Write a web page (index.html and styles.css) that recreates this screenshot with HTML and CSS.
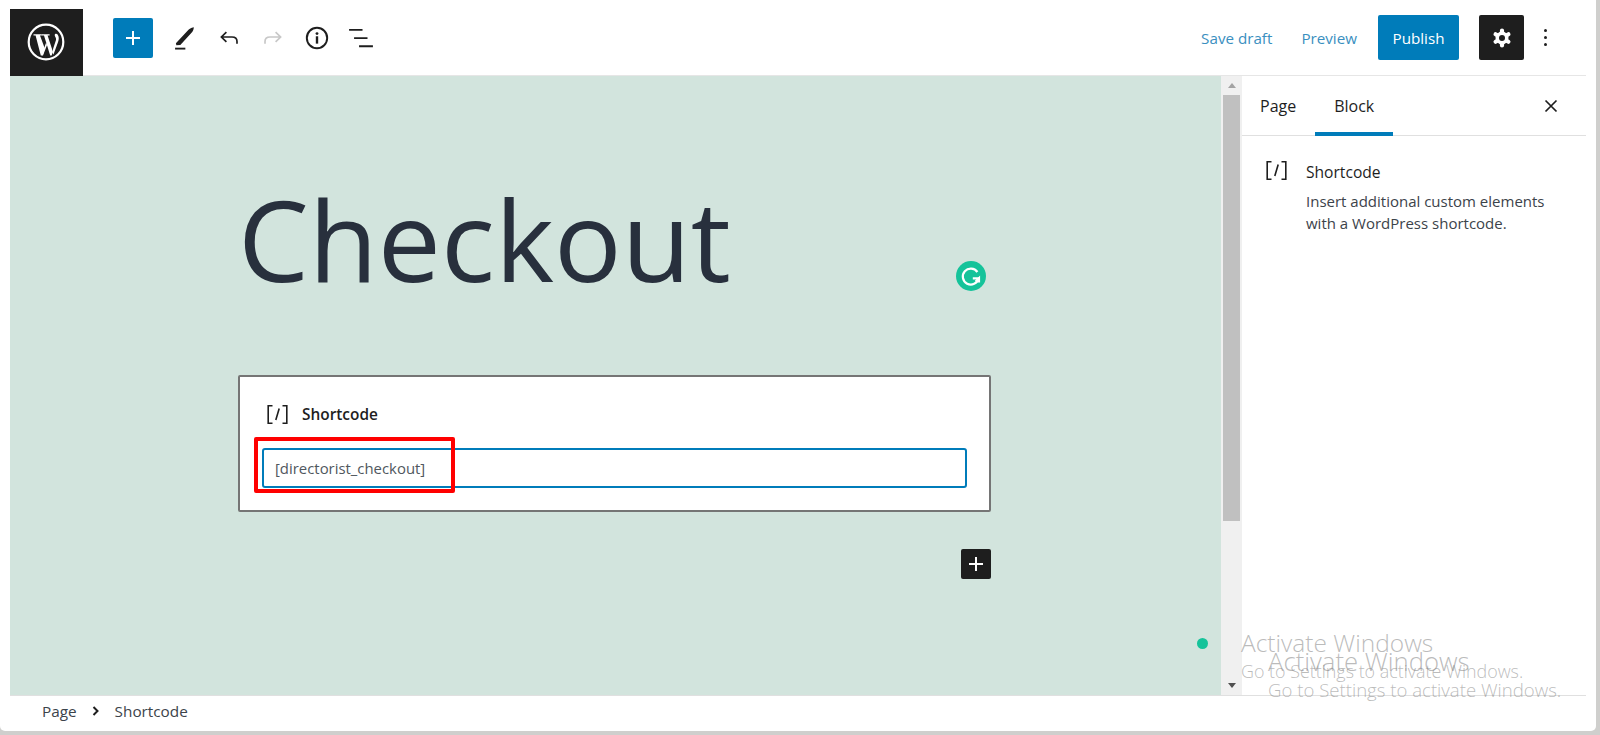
FILE: index.html
```html
<!DOCTYPE html>
<html lang="en">

<head>
    <meta charset="UTF-8" />
    <meta name="viewport" content="width=device-width, initial-scale=1.0" />
    <title>Edit Page</title>

    <link rel="stylesheet" href="styles.css">

</head>

<body>
    <div class="window">
        <header class="topbar">
            <div class="topbar-left">
                <a class="wp-logo" href="#" aria-label="WordPress">
                    <svg viewBox="0 0 40 40" width="40" height="40">
                        <circle cx="20" cy="20" r="17.3" fill="none" stroke="#fff" stroke-width="2.2" />
                        <path fill="#fff" d="M7.5 12.2H15.8V13.5H14L19 27L16.6 33.4H14.8L9.6 13.5H7.5Z" />
                        <path fill="#fff" d="M15.8 12.2H23.6V13.5H21.6L27 30L25.6 33.6H24.2L18 13.5H15.8Z" />
                        <path fill="#fff" d="M15.6 33L20.2 20.4L21 23L17 33.6Z" />
                        <path fill="#fff" d="M27.2 26.5L30 18C30.5 16 29 14.8 28.7 13.2C28.7 11.6 30.8 11.4 31.8 12.8C33.4 15.4 32.8 18.2 31.8 20.8L27.4 32.8L26.6 30Z" />
                    </svg>
                </a>
                <button class="btn-add" type="button" aria-label="Add block">
                    <svg viewBox="0 0 24 24" width="24" height="24"><path fill="#fff" d="M11 5h2v6h6v2h-6v6h-2v-6H5v-2h6z" /></svg>
                </button>
                <button class="tool" type="button" aria-label="Tools">
                    <svg viewBox="0 0 24 24" width="28" height="28"><path fill="#1e1e1e" d="M4.2 16.6 L14.8 5.2 C15.6 4.4 17 3.4 19.6 2.8 C19.4 5.4 18.4 6.8 17.6 7.6 L8 18 L4.6 18.2 Z" /><path fill="#1e1e1e" d="M3.5 20.3h8.8v1.6H3.5z" /></svg>
                </button>
                <button class="tool" type="button" aria-label="Undo">
                    <svg viewBox="0 0 24 24" width="24" height="24"><path fill="none" stroke="#1e1e1e" stroke-width="1.7" d="M9.4 6.2 L4.4 11 L9.4 15.8 M4.6 11 H15 C18 11 20 12.8 20 15.6 V17.8" /></svg>
                </button>
                <button class="tool" type="button" aria-label="Redo">
                    <svg viewBox="0 0 24 24" width="24" height="24"><path fill="none" stroke="#c8c8c8" stroke-width="1.7" d="M14.6 6.2 L19.6 11 L14.6 15.8 M19.4 11 H9 C6 11 4 12.8 4 15.6 V17.8" /></svg>
                </button>
                <button class="tool" type="button" aria-label="Details">
                    <svg viewBox="0 0 24 24" width="26" height="26"><circle cx="12" cy="12" r="9.4" fill="none" stroke="#1e1e1e" stroke-width="1.8" /><path fill="#1e1e1e" d="M10.9 10.4h2.2v6.8h-2.2z" /><circle cx="12" cy="7.9" r="1.3" fill="#1e1e1e" /></svg>
                </button>
                <button class="tool" type="button" aria-label="List view">
                    <svg viewBox="0 0 24 24" width="26" height="26"><path fill="#1e1e1e" d="M1 3.6h12.4v1.7H1zM5.6 11.2h12.4v1.7H5.6zM10.2 18.8h12.8v1.7H10.2z" /></svg>
                </button>
            </div>
            <div class="topbar-right">
                <a class="link" href="#">Save draft</a>
                <a class="link link-last" href="#">Preview</a>
                <button class="btn-publish" type="button">Publish</button>
                <button class="btn-settings" type="button" aria-label="Settings">
                    <svg viewBox="0 0 24 24" width="24" height="24">
                        <circle cx="12" cy="12" r="6.5" fill="#fff" />
                        <path fill="none" stroke="#fff" stroke-width="4.2" stroke-linecap="round" d="M12 4.6V19.4M18.4 8.3L5.6 15.7M5.6 8.3L18.4 15.7" />
                        <circle cx="12" cy="12" r="3" fill="#1e1e1e" />
                    </svg>
                </button>
                <button class="btn-more" type="button" aria-label="Options">
                    <span></span><span></span><span></span>
                </button>
            </div>
        </header>

        <div class="workspace">
            <main class="canvas">
                <h1 class="page-title">Checkout</h1>
                <span class="grammarly">
                    <svg viewBox="0 0 30 30" width="30" height="30"><path fill="none" stroke="#fff" stroke-width="2.2" d="M21.4 11 A8 8 0 1 0 22.6 17.4 H16.8" /><path fill="none" stroke="#fff" stroke-width="2.2" d="M19.6 20.6 L23 17.2 L23 21.4" /></svg>
                </span>
                <section class="shortcode-block">
                    <div class="block-label">
                        <svg class="shortcode-icon" viewBox="0 0 21 19" width="21" height="19"><path fill="none" stroke="#1e1e1e" stroke-width="1.6" d="M5.5 .8H1.2V18.2H5.5M15.5 .8H19.8V18.2H15.5M12.2 3.5L8.8 15" /></svg>
                        <span class="block-name">Shortcode</span>
                    </div>
                    <div class="shortcode-input">[directorist_checkout]</div>
                    <div class="red-box"></div>
                </section>
                <div class="appender">
                    <button class="btn-appender" type="button" aria-label="Add block">
                        <svg viewBox="0 0 24 24" width="24" height="24"><path fill="#fff" d="M11 5h2v6h6v2h-6v6h-2v-6H5v-2h6z" /></svg>
                    </button>
                </div>
                <span class="green-dot"></span>
            </main>

            <div class="scrollbar">
                <span class="arrow-up"></span>
                <div class="thumb"></div>
                <span class="arrow-down"></span>
            </div>

            <aside class="sidebar">
                <div class="tabs">
                    <span class="tab">Page</span>
                    <span class="tab active">Block</span>
                    <button class="btn-close" type="button" aria-label="Close">
                        <svg viewBox="0 0 24 24" width="24" height="24"><path fill="none" stroke="#1e1e1e" stroke-width="1.7" d="M6.5 6.5l11 11M17.5 6.5l-11 11" /></svg>
                    </button>
                </div>
                <div class="block-card">
                    <svg class="shortcode-icon" viewBox="0 0 21 19" width="21" height="19"><path fill="none" stroke="#1e1e1e" stroke-width="1.6" d="M5.5 .8H1.2V18.2H5.5M15.5 .8H19.8V18.2H15.5M12.2 3.5L8.8 15" /></svg>
                    <div class="block-info">
                        <div class="block-name">Shortcode</div>
                        <p>Insert additional custom elements<br>with a WordPress shortcode.</p>
                    </div>
                </div>
            </aside>
        </div>

        <footer class="breadcrumb">
            <span class="crumb-page">Page</span>
            <svg viewBox="0 0 10 12" width="10" height="12"><path fill="none" stroke="#1e1e1e" stroke-width="2" d="M2.5 2l4 4-4 4" /></svg>
            <span>Shortcode</span>
        </footer>
    </div>

    <!-- watermark was captured twice in the source shot -->
    <div class="watermark mark-one">
        <div class="mark-title">Activate Windows</div>
        <div>Go to Settings to activate Windows.</div>
    </div>
    <div class="watermark mark-two">
        <div class="mark-title">Activate Windows</div>
        <div>Go to Settings to activate Windows.</div>
    </div>
</body>

</html>
```
FILE: styles.css
```css
html,
body {
    height: 100%;
    margin: 0;
    padding: 0;
}

body {
    background: #cfcfcd;
    font-family: "Open Sans", "Noto Sans", sans-serif;
    color: #1e1e1e;
    overflow: hidden;
    position: relative;
}

button {
    border: 0;
    padding: 0;
    background: none;
    font: inherit;
    display: flex;
    align-items: center;
    justify-content: center;
}

.window {
    width: 1596px;
    height: 731px;
    background: #fff;
    border-radius: 0 0 5px 5px;
    padding-left: 10px;
    padding-right: 10px;
    box-sizing: border-box;
    display: flex;
    flex-direction: column;
}

/* top bar */
.topbar {
    height: 76px;
    flex: none;
    display: flex;
    justify-content: space-between;
    align-items: center;
    border-bottom: 1px solid #e6e6e6;
    box-sizing: border-box;
}

.topbar-left,
.topbar-right {
    display: flex;
    align-items: center;
}

.wp-logo {
    width: 73px;
    height: 67px;
    margin-top: 9px;
    padding-right: 1px;
    box-sizing: border-box;
    background: #1e1e1e;
    display: flex;
    align-items: center;
    justify-content: center;
}

.btn-add {
    width: 40px;
    height: 40px;
    margin-left: 30px;
    margin-right: 10px;
    background: #007cba;
    border-radius: 2px;
}

.tool {
    width: 44px;
    height: 40px;
}

.topbar-right {
    padding-right: 19px;
}

.link {
    color: #3a8fc0;
    font-size: 15.2px;
    text-decoration: none;
    margin-right: 29px;
}

.link-last {
    margin-right: 21px;
}

.btn-publish {
    width: 81px;
    height: 45px;
    margin-right: 20px;
    background: #007cba;
    border-radius: 2px;
    color: #fff;
    font-size: 15.2px;
}

.btn-settings {
    width: 45px;
    height: 45px;
    background: #1e1e1e;
    border-radius: 2px;
}

.btn-more {
    width: 43px;
    height: 45px;
    flex-direction: column;
    gap: 4px;
}

.btn-more span {
    width: 3px;
    height: 3px;
    border-radius: 50%;
    background: #1e1e1e;
}

/* editor area */
.workspace {
    flex: 1;
    min-height: 0;
    display: flex;
}

.canvas {
    width: 1211px;
    flex: none;
    position: relative;
    background: #d2e4dd;
    padding-left: 228px;
    box-sizing: border-box;
}

.page-title {
    margin: 0;
    padding-top: 83px;
    height: 216px;
    color: #28303d;
    font-size: 112.5px;
    font-weight: 400;
    line-height: 160px;
}

.grammarly {
    position: absolute;
    left: 946px;
    top: 185px;
    width: 30px;
    height: 30px;
    border-radius: 50%;
    background: #15c39a;
}

.green-dot {
    position: absolute;
    left: 1187px;
    top: 562px;
    width: 11px;
    height: 11px;
    border-radius: 50%;
    background: #15c39a;
}

.shortcode-block {
    width: 753px;
    height: 137px;
    position: relative;
    background: #fff;
    border: 2px solid #757575;
    border-radius: 2px;
    box-sizing: border-box;
    padding: 24px 22px 0;
}

.block-label {
    display: flex;
    align-items: center;
    height: 26px;
    margin-bottom: 21px;
}

.shortcode-icon {
    flex: none;
}

.block-label .shortcode-icon {
    margin-left: 5px;
    margin-right: 14px;
}

.block-name {
    font-size: 15.4px;
    font-weight: 600;
}

.shortcode-input {
    height: 40px;
    width: 705px;
    border: 2px solid #007cba;
    border-radius: 3px;
    box-sizing: border-box;
    padding-left: 11px;
    font-size: 14.9px;
    line-height: 37px;
    color: #50575e;
}

.red-box {
    position: absolute;
    left: 14px;
    top: 60px;
    width: 201px;
    height: 56px;
    border: 4px solid #f00;
    border-radius: 2px;
    box-sizing: border-box;
}

.appender {
    width: 753px;
    display: flex;
    justify-content: flex-end;
    margin-top: 37px;
}

.btn-appender {
    width: 30px;
    height: 30px;
    background: #1e1e1e;
    border-radius: 2px;
}

/* scrollbar */
.scrollbar {
    width: 21px;
    flex: none;
    background: #f0f0f0;
    display: flex;
    flex-direction: column;
    align-items: center;
    padding: 7px 0;
    box-sizing: border-box;
}

.thumb {
    width: 17px;
    height: 426px;
    margin-top: 7px;
    background: #c0c0c0;
}

.arrow-up,
.arrow-down {
    width: 0;
    height: 0;
    border-left: 4px solid transparent;
    border-right: 4px solid transparent;
}

.arrow-up {
    border-bottom: 5px solid #a3a3a3;
}

.arrow-down {
    margin-top: auto;
    border-top: 5px solid #505050;
}

/* sidebar */
.sidebar {
    flex: 1;
    min-width: 0;
}

.tabs {
    height: 60px;
    display: flex;
    align-items: stretch;
    border-bottom: 1px solid #e0e0e0;
    box-sizing: border-box;
    position: relative;
    padding-left: 18px;
    font-size: 16px;
}

.tab {
    display: flex;
    align-items: center;
    padding: 0 19px;
    margin-bottom: -1px;
}

.tab:first-child {
    padding-left: 0;
}

.tab.active {
    font-weight: 500;
    border-bottom: 4px solid #007cba;
    padding-top: 4px;
    box-sizing: border-box;
}

.btn-close {
    margin-left: auto;
    width: 24px;
    margin-right: 23px;
}

.block-card {
    display: flex;
    padding: 25px 16px 0 24px;
}

.block-card .shortcode-icon {
    margin-right: 19px;
}

.block-info {
    flex: 1;
}

.block-info .block-name {
    font-size: 15.6px;
    font-weight: 500;
    line-height: 22px;
}

.block-info p {
    margin: 7px 0 0;
    font-size: 15px;
    line-height: 22px;
    color: #3c434a;
}

/* breadcrumb */
.breadcrumb {
    height: 36px;
    flex: none;
    display: flex;
    align-items: center;
    gap: 14px;
    padding-left: 32px;
    padding-bottom: 6px;
    border-top: 1px solid #e0e0e0;
    box-sizing: border-box;
    font-size: 15.3px;
    color: #3c434a;
}

/* windows watermark */
.watermark {
    position: absolute;
    font-size: 17.9px;
    line-height: 26px;
    color: rgba(120, 120, 120, 0.5);
    font-weight: 300;
    white-space: nowrap;
}

.mark-title {
    font-size: 24.5px;
    line-height: 30px;
}

.mark-one {
    left: 1241px;
    top: 628px;
}

.mark-two {
    left: 1268px;
    top: 647px;
    font-size: 18.6px;
}

.mark-two .mark-title {
    font-size: 25.7px;
}
```
